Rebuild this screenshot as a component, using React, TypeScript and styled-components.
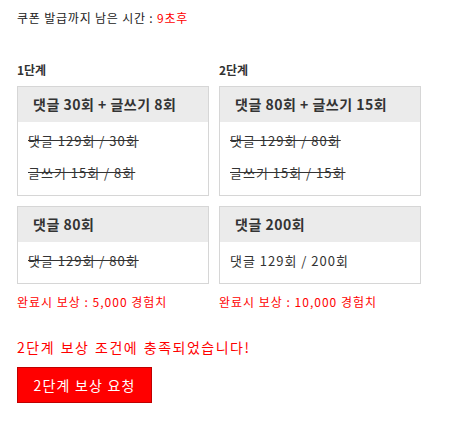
import React from 'react';
import styled, { createGlobalStyle } from 'styled-components';

const GlobalStyle = createGlobalStyle`
    body {
        margin: 0;
        background: #fff;
        font-family: "Noto Sans CJK KR", "Noto Sans", sans-serif;
        color: #222;
    }
`

const Page = styled.div`
    padding: 10px 17px 20px;
`

const Timer = styled.div`
    font-size: 12px;
    line-height: 16px;
    letter-spacing: 0.8px;
    color: #222;
    span { color: #ff0000; }
`

const Stages = styled.div`
    display: flex;
    gap: 10px;
    margin-top: 36px;
`

interface StageProps {
    width: number,
}

const Stage = styled.div<StageProps>`
    width: ${(props) => props.width}px;
    display: flex;
    flex-direction: column;
`

const StageTitle = styled.div`
    font-size: 12px;
    font-weight: bold;
    line-height: 16px;
    color: #333;
    margin-bottom: 8px;
`

const Card = styled.div`
    border: 1px solid #d6d6d6;
    margin-bottom: 10px;
    background: #fff;
`

const CardHead = styled.div`
    background: #ebebeb;
    height: 35px;
    line-height: 35px;
    padding-left: 15px;
    font-size: 14px;
    font-weight: bold;
    letter-spacing: 0.5px;
    color: #333;
`

const CardBody = styled.div`
    padding: 3px 10px 6px;
`

interface RowProps {
    done: boolean,
}

const Row = styled.div<RowProps>`
    height: 32px;
    line-height: 32px;
    font-size: 13px;
    letter-spacing: 1px;
    color: #333;
    text-decoration: ${(props) => props.done ? 'line-through' : 'none'};
`

const Reward = styled.div`
    font-size: 12px;
    line-height: 16px;
    letter-spacing: 1px;
    color: #ff0000;
`

const Message = styled.div`
    margin-top: 28px;
    font-size: 14px;
    line-height: 18px;
    letter-spacing: 1.5px;
    word-spacing: 1px;
    color: #ff0000;
`

const RequestButton = styled.button`
    margin-top: 11px;
    width: 135px;
    height: 36px;
    background: #ff0000;
    border: 1px solid #c00000;
    color: #fff;
    font-family: "Noto Sans CJK KR", "Noto Sans", sans-serif;
    font-size: 14px;
    letter-spacing: 1.2px;
    cursor: pointer;
`

const stages = [
    {
        title: '1단계',
        width: 192,
        cards: [
            { head: '댓글 30회 + 글쓰기 8회', rows: [['댓글 129회 / 30회', true], ['글쓰기 15회 / 8회', true]] },
            { head: '댓글 80회', rows: [['댓글 129회 / 80회', true]] },
        ],
        reward: '완료시 보상 : 5,000 경험치',
    },
    {
        title: '2단계',
        width: 202,
        cards: [
            { head: '댓글 80회 + 글쓰기 15회', rows: [['댓글 129회 / 80회', true], ['글쓰기 15회 / 15회', true]] },
            { head: '댓글 200회', rows: [['댓글 129회 / 200회', false]] },
        ],
        reward: '완료시 보상 : 10,000 경험치',
    },
]

function App() {
    return (
        <Page>
            <GlobalStyle />
            <Timer>쿠폰 발급까지 남은 시간 : <span>9초후</span></Timer>
            <Stages>
                {stages.map(stage => (
                    <Stage key={stage.title} width={stage.width}>
                        <StageTitle>{stage.title}</StageTitle>
                        {stage.cards.map(card => (
                            <Card key={card.head}>
                                <CardHead>{card.head}</CardHead>
                                <CardBody>
                                    {card.rows.map(([text, done]) => (
                                        <Row key={text as string} done={done as boolean}>{text}</Row>
                                    ))}
                                </CardBody>
                            </Card>
                        ))}
                        <Reward>{stage.reward}</Reward>
                    </Stage>
                ))}
            </Stages>
            <Message>2단계 보상 조건에 충족되었습니다!</Message>
            <RequestButton>2단계 보상 요청</RequestButton>
        </Page>
    )
}

export default App;
